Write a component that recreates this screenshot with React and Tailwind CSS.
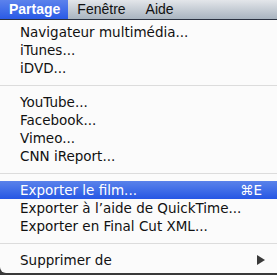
import React from 'react'

const GROUPS = [
  ['Navigateur multimédia...', 'iTunes...', 'iDVD...'],
  ['YouTube...', 'Facebook...', 'Vimeo...', 'CNN iReport...'],
  ['Exporter le film...', 'Exporter à l’aide de QuickTime...', 'Exporter en Final Cut XML...'],
  ['Supprimer de'],
]

function Row({ label }) {
  const active = label === 'Exporter le film...'
  const sub = label === 'Supprimer de'
  return (
    <div
      className={
        'h-[18px] flex items-center pl-[20px] pr-[15px] ' +
        (active ? 'bg-gradient-to-b from-[#5a82ea] to-[#2656e4] text-white' : 'text-[#111]')
      }
    >
      <span className="flex-1 whitespace-nowrap">{label}</span>
      {active && <span className="whitespace-nowrap">⌘E</span>}
      {sub && (
        <svg width="8" height="10" viewBox="0 0 8 10" className="mr-[-3px]">
          <path d="M0 0 L8 5 L0 10 Z" fill="#3a3a3a" />
        </svg>
      )}
    </div>
  )
}

export default function App() {
  return (
    <div
      className="w-[277px] h-[275px] overflow-hidden bg-[#3a3a3a] select-none"
      style={{ fontFamily: '"DejaVu Sans", "Liberation Sans", sans-serif' }}
    >
      {/* Menu bar */}
      <div className="h-[20px] flex items-center bg-gradient-to-b from-[#e3e6ea] to-[#a9b4c0] border-b border-[#2a3140] text-[14px] text-[#111] font-['Liberation_Sans',sans-serif]">
        <div className="h-full flex items-center pl-[9px] pr-[8px] bg-gradient-to-b from-[#5c82ec] to-[#2a5ae6] text-white font-bold">
          Partage
        </div>
        <div className="pl-[9px] pr-[9px]">Fenêtre</div>
        <div className="pl-[11px]">Aide</div>
      </div>

      {/* Dropdown */}
      <div className="bg-[#fbfbfb] rounded-bl-[6px] pt-[3px] pb-[4px] text-[13.5px]">
        {GROUPS.map((g, i) => (
          <div key={i}>
            {i > 0 && (
              <div className="h-[16px] flex items-center">
                <div className="w-full h-px bg-[#dcdcdc]" />
              </div>
            )}
            {g.map((l) => (
              <Row key={l} label={l} />
            ))}
          </div>
        ))}
      </div>
    </div>
  )
}
